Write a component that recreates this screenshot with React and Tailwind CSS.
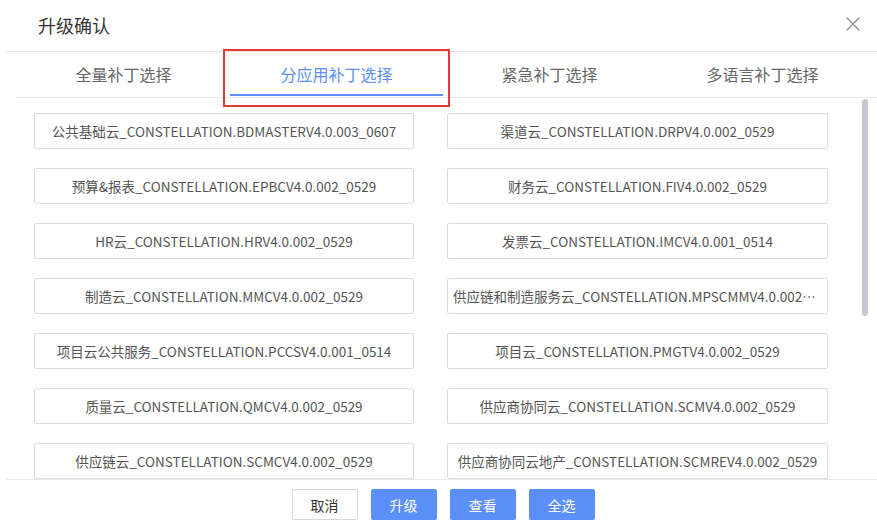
import React from "react";

const tabs = ["全量补丁选择", "分应用补丁选择", "紧急补丁选择", "多语言补丁选择"];

const patches = [
  "公共基础云_CONSTELLATION.BDMASTERV4.0.003_0607",
  "渠道云_CONSTELLATION.DRPV4.0.002_0529",
  "预算&报表_CONSTELLATION.EPBCV4.0.002_0529",
  "财务云_CONSTELLATION.FIV4.0.002_0529",
  "HR云_CONSTELLATION.HRV4.0.002_0529",
  "发票云_CONSTELLATION.IMCV4.0.001_0514",
  "制造云_CONSTELLATION.MMCV4.0.002_0529",
  "供应链和制造服务云_CONSTELLATION.MPSCMMV4.0.002_0529",
  "项目云公共服务_CONSTELLATION.PCCSV4.0.001_0514",
  "项目云_CONSTELLATION.PMGTV4.0.002_0529",
  "质量云_CONSTELLATION.QMCV4.0.002_0529",
  "供应商协同云_CONSTELLATION.SCMV4.0.002_0529",
  "供应链云_CONSTELLATION.SCMCV4.0.002_0529",
  "供应商协同云地产_CONSTELLATION.SCMREV4.0.002_0529",
];

const font = { fontFamily: '"Noto Sans CJK SC", "Noto Sans", sans-serif' };

export default function App() {
  const active = 1;
  return (
    <div
      className="w-[877px] h-[525px] bg-white flex flex-col relative overflow-hidden"
      style={font}
    >
      {/* header */}
      <div className="ml-[6px] h-[52px] shrink-0 border-b border-[#e8e8e8] flex items-center justify-between pl-[32px] pr-[16px]">
        <span className="text-[18px] text-[#333] leading-none -mt-[2px]">升级确认</span>
        <svg width="16" height="16" viewBox="0 0 16 16" className="-mt-[4px]">
          <path d="M1.5 1.5 L14.5 14.5 M14.5 1.5 L1.5 14.5" stroke="#8a8a8a" strokeWidth="1.2" fill="none" />
        </svg>
      </div>

      {/* tabs */}
      <div className="ml-[16px] h-[46px] shrink-0 border-b border-[#e8e8e8] flex pl-[1px]">
        {tabs.map((t, i) => (
          <div
            key={t}
            className={
              "relative w-[213px] flex items-center justify-center text-[16px] pb-[1px] " +
              (i === active ? "text-[#5b8ff9]" : "text-[#666]")
            }
          >
            {t}
            {i === active && (
              <div className="absolute left-0 right-0 bottom-[1px] h-[2px] bg-[#5b8ff9]" />
            )}
          </div>
        ))}
      </div>

      {/* patch list */}
      <div className="relative flex-1 overflow-hidden">
        <div className="grid grid-cols-[380px_381px] gap-x-[33px] gap-y-[19px] pl-[34px] pt-[15px]">
          {patches.map((p) => (
            <div
              key={p}
              className="h-[36px] border border-[#dcdcdc] rounded-[2px] bg-white flex items-center justify-center px-[5px] text-[13.5px] text-[#555]"
            >
              <span className="truncate">{p}</span>
            </div>
          ))}
        </div>
        {/* scrollbar thumb */}
        <div className="absolute left-[862px] top-[1px] w-[6px] h-[217px] rounded-[3px] bg-[#c3c9d2]" />
      </div>

      {/* footer */}
      <div className="ml-[6px] h-[46px] shrink-0 border-t border-[#e8e8e8] bg-white flex items-start justify-center pl-[3px] pt-[9px] gap-[13px]">
        <button className="w-[66px] h-[31px] border border-[#d9d9d9] rounded-[2px] bg-white text-[14px] leading-none text-[#333]">
          取消
        </button>
        <button className="w-[66px] h-[31px] rounded-[2px] bg-[#5b8ff9] text-[14px] leading-none text-white">
          升级
        </button>
        <button className="w-[66px] h-[31px] rounded-[2px] bg-[#5b8ff9] text-[14px] leading-none text-white">
          查看
        </button>
        <button className="w-[66px] h-[31px] rounded-[2px] bg-[#5b8ff9] text-[14px] leading-none text-white">
          全选
        </button>
      </div>

      {/* red highlight frame around the active tab */}
      <div className="absolute left-[223px] top-[49px] w-[227px] h-[58px] border-2 border-[#e53935] pointer-events-none" />
    </div>
  );
}
